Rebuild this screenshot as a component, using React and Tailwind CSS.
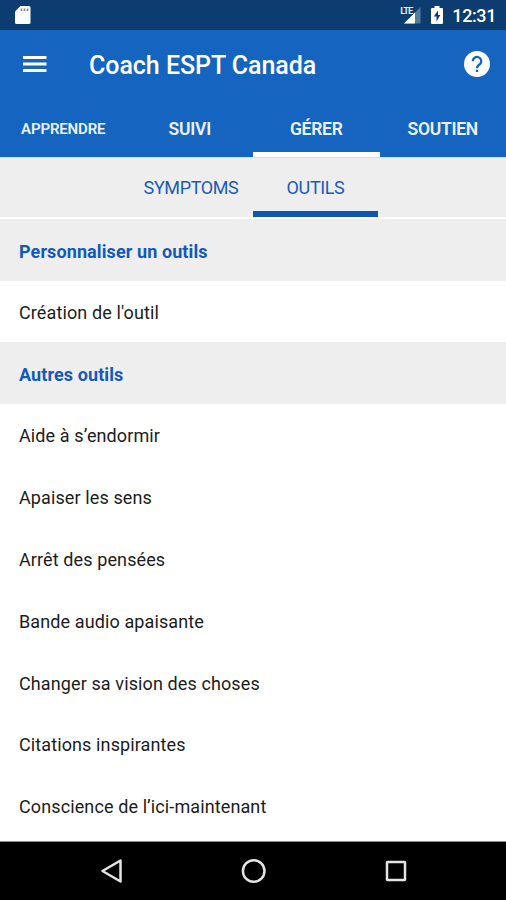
const tools = [
  'Aide à s’endormir',
  'Apaiser les sens',
  'Arrêt des pensées',
  'Bande audio apaisante',
  'Changer sa vision des choses',
  'Citations inspirantes',
  'Conscience de l’ici-maintenant',
];

function StatusBar() {
  return (
    <div className="flex h-[30px] shrink-0 items-center bg-[#0d3c70] pl-[14px] pr-[10px] text-white">
      <svg width="18" height="20" viewBox="0 0 18 20">
        <path d="M6.500 1H15a1.500 1.500 0 0 1 1.500 1.500v15A1.500 1.500 0 0 1 15 19H2.500A1.500 1.500 0 0 1 1 17.500V6.500Z" fill="#fff" />
        <path d="M7.500 3.500v2.500M10.500 3.500v2.500M13.500 3.500v2.500" stroke="#77879f" strokeWidth="1.600" />
      </svg>
      <div className="ml-auto flex items-center">
        <div className="relative h-[20px] w-[22px]">
          <svg className="block" width="22" height="20" viewBox="0 0 22 20">
            <path d="M21.500 2V18.500H5Z" fill="#527b9d" />
            <path d="M16 7.500V18.500H5Z" fill="#fff" />
            <path d="M0 0h14v10H0z" fill="#0d3c70" />
          </svg>
          <span className="absolute left-[1px] top-[1px] text-[9.5px] font-bold leading-[9px] tracking-[-1.2px] text-[#dfe6ef]">LTE</span>
        </div>
        <svg className="ml-[10px]" width="12" height="20" viewBox="0 0 12 20">
          <path d="M3.500 1h5v2H11q1 0 1 1v14q0 1-1 1H1q-1 0-1-1V4q0-1 1-1h2.500Z" fill="#fff" />
          <path d="M7 5.500 2.800 11.500H5.500V16.500L9.300 10H7Z" fill="#0d3c70" />
        </svg>
        <span className="ml-[9px] mt-[2px] text-[18px] font-medium leading-[28px] tracking-[-0.4px]">12:31</span>
      </div>
    </div>
  );
}

function AppBar() {
  return (
    <div className="flex h-[70px] shrink-0 items-center bg-[#1565c0] pl-[23px] pr-4 text-white">
      <svg className="-mt-[3px]" width="24" height="18" viewBox="0 0 24 18" fill="#fff">
        <path d="M0 1h23.500v3H0zM0 7.500h23.500v3H0zM0 14h23.500v3H0z" />
      </svg>
      <h1 className="ml-[42px] pt-[2px] text-[25px] font-medium leading-[68px] tracking-[-0.04px]">Coach ESPT Canada</h1>
      <div className="-mt-[2px] ml-auto flex size-[26px] items-center justify-center rounded-full bg-white">
        <svg width="14" height="20" viewBox="0 0 14 20" fill="none" stroke="#1565c0" strokeWidth="2.300">
          <path d="M2.800 7.200a4.200 4.200 0 1 1 7.200 2.900C8.300 11.500 7 12 7 14.200" />
          <path d="M7 15.700v2.300" />
        </svg>
      </div>
    </div>
  );
}

function MainTabs() {
  return (
    <div className="grid h-[57px] shrink-0 grid-cols-4 bg-[#1565c0] text-center text-[17.5px] font-semibold leading-[58px] tracking-[-0.25px] text-[#eaf2ff]">
      <div className="text-[15px] tracking-[-0.15px]">APPRENDRE</div>
      <div>SUIVI</div>
      <div className="h-[58px] border-b-[6px] border-white">GÉRER</div>
      <div>SOUTIEN</div>
    </div>
  );
}

function SubTabs() {
  return (
    <div className="flex h-[60px] shrink-0 border-t border-[#d5dde8] bg-[#eeeeee] pl-[129px] text-center text-[18px] leading-[60px] tracking-[-0.38px] text-[#1a5bb8]">
      <div className="w-[124px]">SYMPTOMS</div>
      <div className="h-[59px] w-[125px] border-b-[6px] border-[#0d56b2]">OUTILS</div>
    </div>
  );
}

function SectionHeader({ children }) {
  return (
    <h2 className="h-[62px] shrink-0 bg-[#eeeeee] pl-[19px] text-[18px] font-bold leading-[65px] tracking-[0.1px] text-[#1459b8]">
      {children}
    </h2>
  );
}

export default function App() {
  return (
    <div className="flex h-[900px] w-[506px] flex-col overflow-hidden bg-white font-['Roboto',sans-serif]">
      <StatusBar />
      <AppBar />
      <MainTabs />
      <SubTabs />
      <main className="flex flex-1 flex-col overflow-hidden pt-[2px] text-[18px] tracking-[0.11px] text-[#1c1c1c]">
        <SectionHeader>Personnaliser un outils</SectionHeader>
        <div className="h-[61px] shrink-0 pl-[19px] leading-[64px]">Création de l'outil</div>
        <SectionHeader>Autres outils</SectionHeader>
        <ul>
          {tools.map((label) => (
            <li key={label} className="h-[61.9px] pl-[19px] leading-[64.8px]">
              {label}
            </li>
          ))}
        </ul>
      </main>
      <nav className="h-[59px] shrink-0 border-t border-[#8c8c8c] bg-black">
        <svg className="block" width="506" height="58" viewBox="0 0 506 58" fill="none" stroke="#e4e4e4" strokeWidth="2.500">
          <path d="M120.500 18.500V39.500L102.500 29Z" strokeLinejoin="round" />
          <circle cx="253.700" cy="29" r="10.800" />
          <rect x="387" y="20" width="18" height="18" rx="0.500" />
        </svg>
      </nav>
    </div>
  );
}
